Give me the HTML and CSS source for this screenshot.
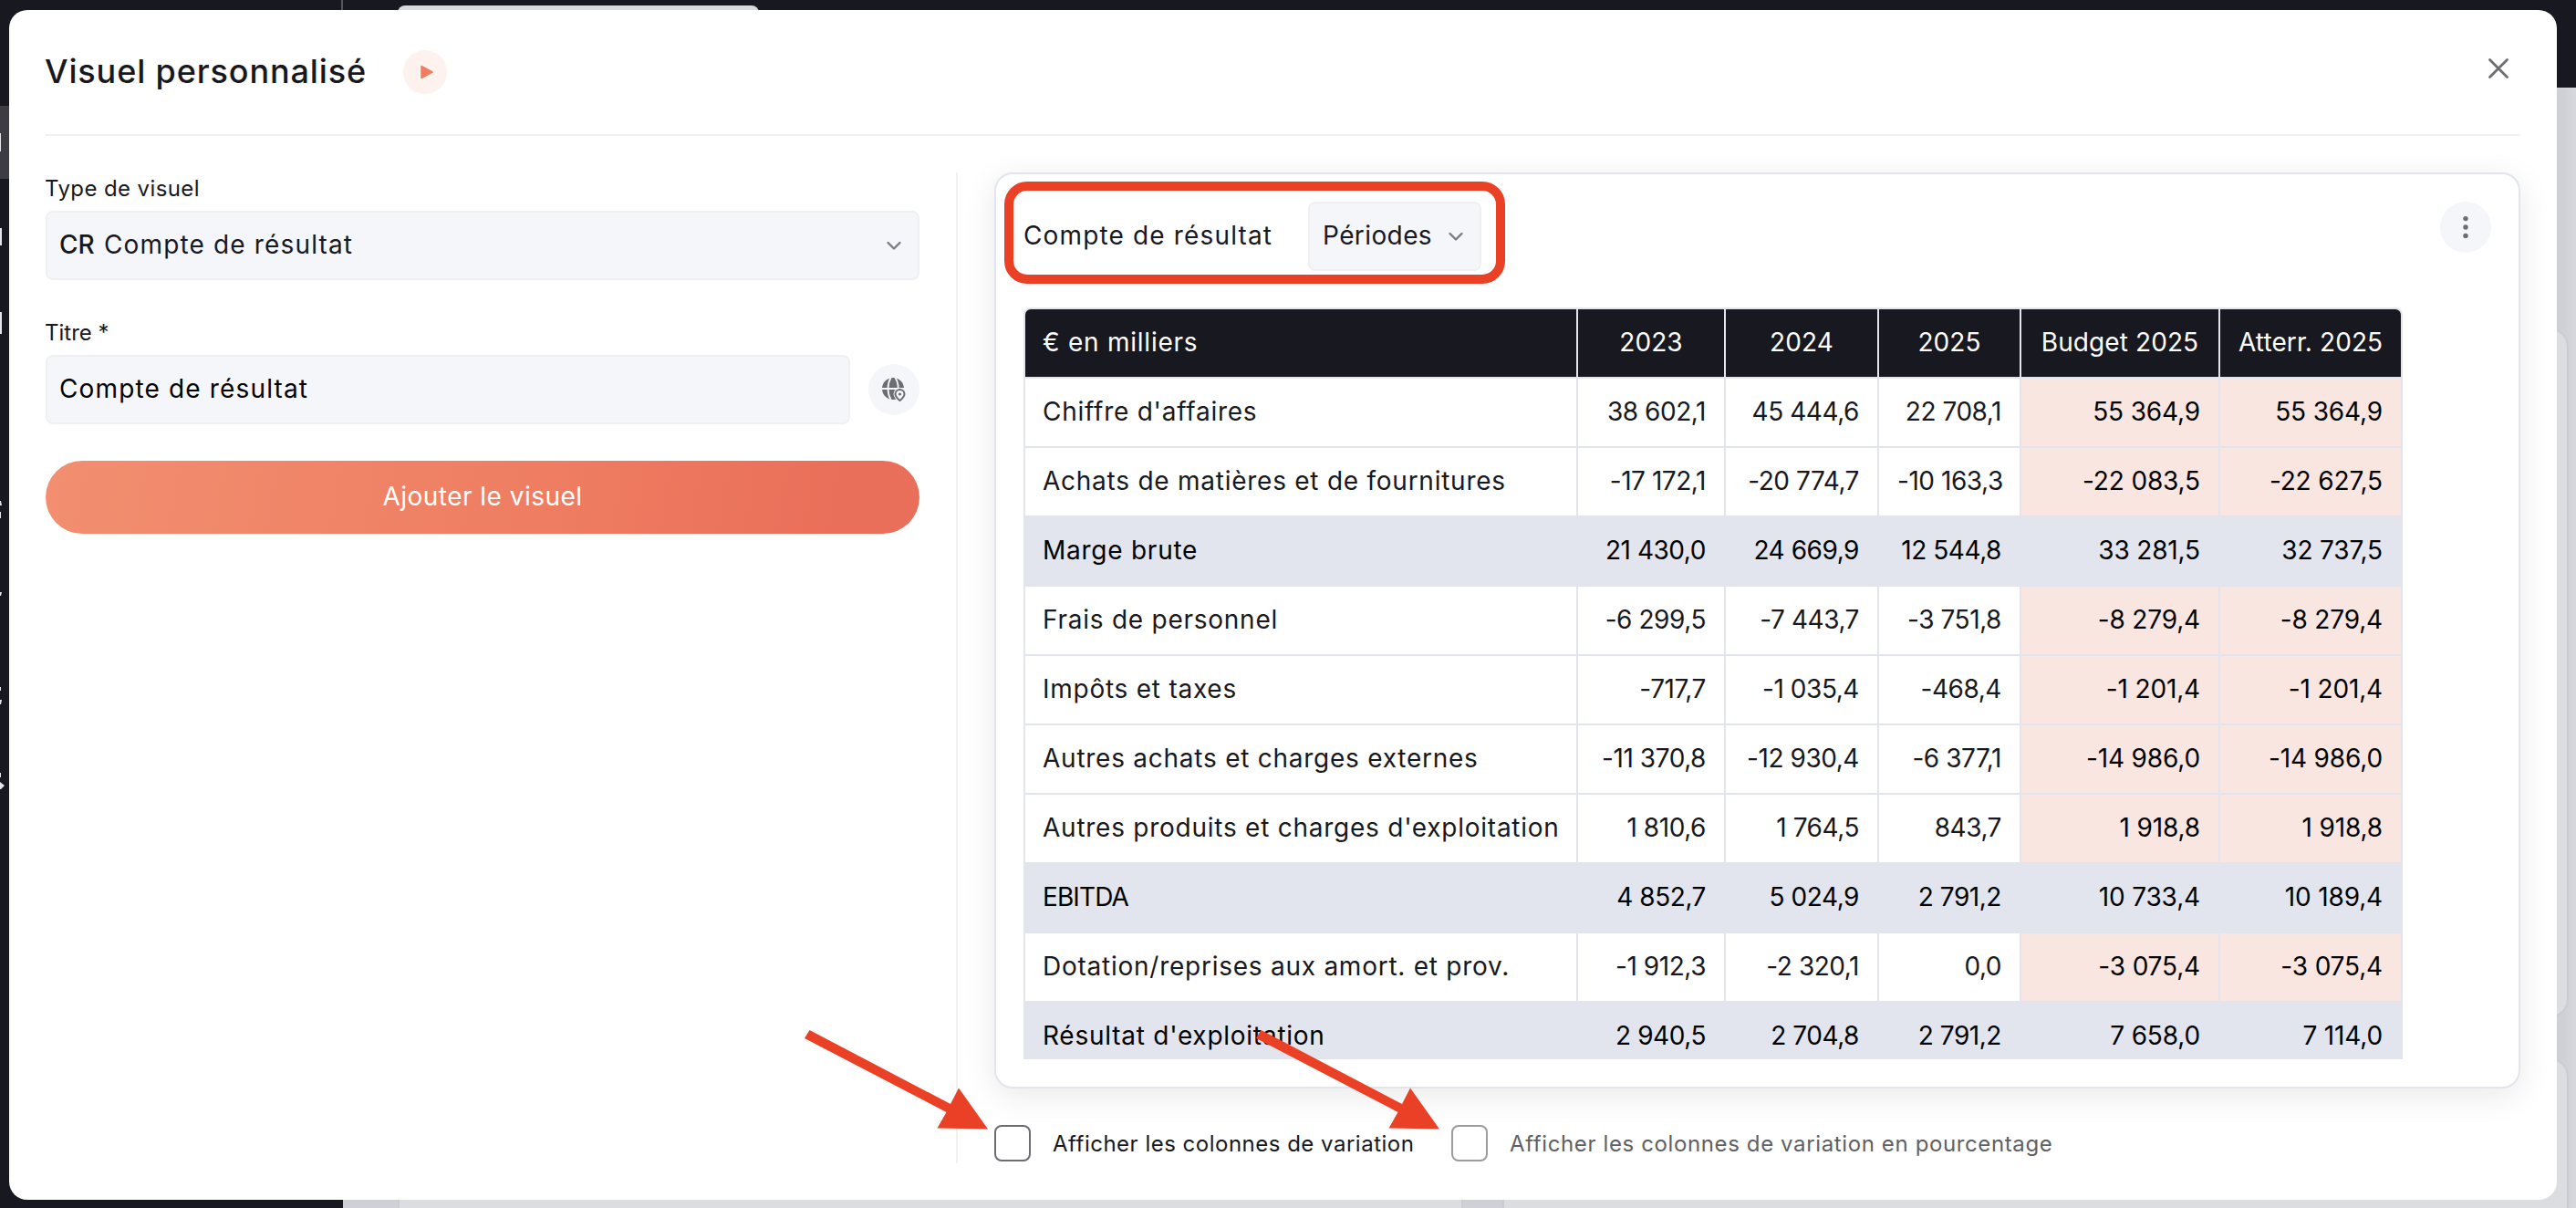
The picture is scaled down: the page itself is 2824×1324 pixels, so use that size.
FILE: index.html
```html
<!DOCTYPE html>
<html lang="fr">
<head>
    <meta charset="UTF-8">
    <meta name="viewport" content="width=device-width, initial-scale=1.0">
    <title>Visuel personnalisé</title>
    <link rel="stylesheet" href="styles.css">
</head>
<body>
    <!-- Dimmed application behind the dialog -->
    <div class="app">
        <div class="topbar">
            <div class="topbar-brand"></div>
            <div class="topbar-tab"></div>
        </div>
        <div class="app-body">
            <div class="sidebar">
                <div class="sidebar-active"></div>
                <svg class="sidebar-icons" width="10" height="900" viewBox="0 0 10 900" fill="#e4e5e8">
                    <path d="M0 146h1v20H0zM0 250h2v19H0zM0 342h2v24H0zM0 549h1l1 5H0zM0 561h1v7H0zM0 649h2l-1 4H0zM0 753h1v4H0zM0 767h2l-1 5H0zM0 847h1v5H0zM0 857l5 4-4 4H0z"/>
                </svg>
            </div>
            <div class="dashboard">
                <div class="tile tile-side"></div>
                <div class="tile"></div>
                <div class="tile tile-short"></div>
                <div class="tile"></div>
            </div>
        </div>
    </div>

    <div class="modal">
        <div class="modal-header">
            <h1 class="modal-title">Visuel personnalisé</h1>
            <button class="play">
                <svg width="14" height="16" viewBox="0 0 14 16"><path d="M1 1.500 13 8 1 14.500z" fill="#f07d61" stroke="#f07d61" stroke-width="1.500" stroke-linejoin="round"/></svg>
            </button>
            <button class="close">
                <svg width="24" height="24" viewBox="0 0 24 24"><path d="M2.500 2.500l19 19M21.500 2.500l-19 19" fill="none" stroke="#6c6c72" stroke-width="2.800" stroke-linecap="round"/></svg>
            </button>
        </div>

        <div class="modal-body">
            <div class="form">
                <label class="label label-type">Type de visuel</label>
                <div class="field">
                    <span class="field-code">CR</span>
                    <span class="field-text">Compte de résultat</span>
                    <svg class="chevron" width="20" height="12" viewBox="0 0 20 12"><path d="M3.500 3l6.500 6.500L16.500 3" fill="none" stroke="#7b7b82" stroke-width="2.400" stroke-linecap="round" stroke-linejoin="round"/></svg>
                </div>
                <label class="label label-title">Titre *</label>
                <div class="field-row">
                    <div class="field field-input"><span class="field-text">Compte de résultat</span></div>
                    <button class="round">
                        <svg width="28" height="28" viewBox="0 0 28 28">
                            <circle cx="13" cy="13" r="12" fill="#6c6c72"/>
                            <path d="M0 13h26M10.500 1C6.500 8 6.500 18 10.500 25M15.500 1c3 5 3.600 9 3 14" fill="none" stroke="#f5f6fa" stroke-width="1.800"/>
                            <path d="M20.500 28.500c-4.500-4-7-6.500-7-9.500a7 7 0 0 1 14 0c0 3-2.500 5.500-7 9.500z" fill="#f5f6fa"/>
                            <path d="M20.500 26c-3.600-3-5-4.800-5-7a5 5 0 0 1 10 0c0 2.200-1.400 4-5 7z" fill="#f5f6fa" stroke="#6c6c72" stroke-width="2"/>
                            <circle cx="20.500" cy="19" r="1.600" fill="#6c6c72"/>
                        </svg>
                    </button>
                </div>
                <button class="submit">Ajouter le visuel</button>
            </div>

            <div class="preview">
                <div class="card">
                    <div class="card-header">
                        <span class="card-title">Compte de résultat</span>
                        <div class="select">
                            <span class="select-text">Périodes</span>
                            <svg width="20" height="12" viewBox="0 0 20 12"><path d="M3.500 3l6.500 6.500L16.500 3" fill="none" stroke="#7b7b82" stroke-width="2.400" stroke-linecap="round" stroke-linejoin="round"/></svg>
                        </div>
                        <button class="round card-menu">
                            <svg width="6" height="26" viewBox="0 0 6 26" fill="#6c6c72"><circle cx="3" cy="3.600" r="2.700"/><circle cx="3" cy="13" r="2.700"/><circle cx="3" cy="22.400" r="2.700"/></svg>
                        </button>
                        <div class="highlight"></div>
                    </div>
                    <div class="table-wrap">
                        <table class="table">
                            <colgroup>
                                <col class="col-name">
                                <col class="col-2023">
                                <col class="col-2024">
                                <col class="col-2025">
                                <col class="col-budget">
                                <col class="col-atterr">
                            </colgroup>
                            <thead>
                                <tr><th>€ en milliers</th><th>2023</th><th>2024</th><th>2025</th><th>Budget 2025</th><th>Atterr. 2025</th></tr>
                            </thead>
                            <tbody>
                                <tr><td>Chiffre d'affaires</td><td>38 602,1</td><td>45 444,6</td><td>22 708,1</td><td>55 364,9</td><td>55 364,9</td></tr>
                                <tr><td>Achats de matières et de fournitures</td><td>-17 172,1</td><td>-20 774,7</td><td>-10 163,3</td><td>-22 083,5</td><td>-22 627,5</td></tr>
                                <tr class="total"><td>Marge brute</td><td>21 430,0</td><td>24 669,9</td><td>12 544,8</td><td>33 281,5</td><td>32 737,5</td></tr>
                                <tr><td>Frais de personnel</td><td>-6 299,5</td><td>-7 443,7</td><td>-3 751,8</td><td>-8 279,4</td><td>-8 279,4</td></tr>
                                <tr><td>Impôts et taxes</td><td>-717,7</td><td>-1 035,4</td><td>-468,4</td><td>-1 201,4</td><td>-1 201,4</td></tr>
                                <tr><td>Autres achats et charges externes</td><td>-11 370,8</td><td>-12 930,4</td><td>-6 377,1</td><td>-14 986,0</td><td>-14 986,0</td></tr>
                                <tr><td>Autres produits et charges d'exploitation</td><td>1 810,6</td><td>1 764,5</td><td>843,7</td><td>1 918,8</td><td>1 918,8</td></tr>
                                <tr class="total"><td class="acronym">EBITDA</td><td>4 852,7</td><td>5 024,9</td><td>2 791,2</td><td>10 733,4</td><td>10 189,4</td></tr>
                                <tr><td>Dotation/reprises aux amort. et prov.</td><td>-1 912,3</td><td>-2 320,1</td><td>0,0</td><td>-3 075,4</td><td>-3 075,4</td></tr>
                                <tr class="total"><td>Résultat d'exploitation</td><td>2 940,5</td><td>2 704,8</td><td>2 791,2</td><td>7 658,0</td><td>7 114,0</td></tr>
                            </tbody>
                        </table>
                    </div>
                </div>

                <div class="options">
                    <label class="option"><span class="checkbox"></span><span class="option-text">Afficher les colonnes de variation</span></label>
                    <label class="option option-disabled"><span class="checkbox"></span><span class="option-text">Afficher les colonnes de variation en pourcentage</span></label>
                </div>
            </div>
        </div>

        <svg class="arrow arrow-first" width="202" height="110" viewBox="0 0 202 110"><path d="M5.500 0 160 81 169 63.500 201 108.500 145.500 107.500 155.500 90 0 9z" fill="#ea4025"/></svg>
        <svg class="arrow arrow-second" width="202" height="110" viewBox="0 0 202 110"><path d="M5.500 0 160 81 169 63.500 201 108.500 145.500 107.500 155.500 90 0 9z" fill="#ea4025"/></svg>
    </div>
</body>
</html>
```

FILE: styles.css
```css
* {
    box-sizing: border-box;
}

body {
    margin: 0;
    width: 2824px;
    height: 1324px;
    position: relative;
    overflow: hidden;
    font-family: Inter, "Open Sans", sans-serif;
    font-size: 28px;
    color: #181820;
    background-color: #d9dadf;
}

button {
    border: none;
    padding: 0;
    font: inherit;
    display: flex;
    align-items: center;
    justify-content: center;
}

/* background application */
.app {
    display: flex;
    flex-direction: column;
    height: 100%;
}

.topbar {
    display: flex;
    height: 96px;
    background-color: #181820;
}

.topbar-brand {
    width: 376px;
    border-right: 2px solid #55555c;
}

.topbar-tab {
    width: 396px;
    height: 40px;
    margin: 6px 0 0 60px;
    border-radius: 8px;
    background-color: #d9dadd;
}

.app-body {
    display: flex;
    flex: 1;
    min-height: 0;
}

.sidebar {
    width: 376px;
    position: relative;
    background-color: #181820;
}

.sidebar-active {
    height: 80px;
    margin-top: 20px;
    background-color: #3c3c42;
}

.sidebar-icons {
    position: absolute;
    left: 0;
    top: -96px;
}

.dashboard {
    flex: 1;
    display: grid;
    grid-template-columns: 1168px 1169px;
    grid-template-rows: 755px 200px;
    gap: 45px 43px;
    padding: 264px 0 0 60px;
    background-color: #cfd0d5;
    box-shadow: inset -10px 0 10px -4px #d9dadf;
}

.tile {
    border: 2px solid #cbccd1;
    border-radius: 20px;
    background-color: #dcdde0;
}

.tile-side {
    width: 1168px;
}

.tile-short {
    border-radius: 20px 20px 0 0;
}

/* dialog */
.modal {
    position: absolute;
    left: 10px;
    top: 11px;
    width: 2793px;
    height: 1304px;
    padding: 0 40px;
    border-radius: 20px;
    background-color: #fff;
}

.modal-header {
    display: flex;
    align-items: center;
    height: 138px;
    border-bottom: 2px solid #f1f1f3;
}

.modal-title {
    margin: 0 41px 2px -1px;
    width: 352px;
    font-size: 36px;
    font-weight: 500;
    letter-spacing: 0.88px;
    white-space: nowrap;
}

.play {
    width: 48px;
    height: 48px;
    padding-left: 3px;
    border-radius: 50%;
    background-color: #fef2ee;
}

.close {
    margin: 0 12px 9px auto;
    background: none;
}

.modal-body {
    display: flex;
    height: 1126px;
    padding-top: 40px;
}

.form {
    width: 1000px;
    padding-right: 40px;
    border-right: 2px solid #f1f1f4;
}

.label {
    display: block;
    height: 42px;
    margin-left: -1px;
    line-height: 36px;
    font-size: 24px;
    letter-spacing: 0.4px;
}

.label-title {
    margin-top: 40px;
    letter-spacing: 0;
}

.field {
    display: flex;
    align-items: center;
    height: 76px;
    padding: 0 16px 2px 13px;
    border: 2px solid #f0f0f3;
    border-radius: 8px;
    background-color: #f5f6fa;
}

.field-code {
    width: 49px;
    font-weight: 500;
}

.field-text,
.card-title {
    letter-spacing: 1.15px;
}

.chevron {
    margin: 2px 0 0 auto;
}

.field-row {
    display: flex;
    align-items: center;
    gap: 20px;
}

.field-input {
    width: 882px;
    color: #000;
}

.round {
    width: 56px;
    height: 56px;
    border-radius: 50%;
    background-color: #f5f6fa;
}

.submit {
    width: 100%;
    height: 80px;
    margin-top: 40px;
    padding-bottom: 2px;
    border-radius: 40px;
    color: #fff;
    letter-spacing: 0.48px;
    background: linear-gradient(100deg, #f28f70 0%, #ee7c60 60%, #ea6f5a 90%);
}

.preview {
    flex: 1;
    padding-left: 40px;
}

.card {
    height: 1004px;
    padding: 30px 30px 0;
    border: 2px solid #e2e5ed;
    border-radius: 20px;
    background-color: #fff;
    box-shadow: 0 8px 36px rgba(0, 0, 0, 0.09);
}

.card-header {
    display: flex;
    position: relative;
    height: 116px;
}

.card-title {
    width: 312px;
    line-height: 74px;
}

.select {
    display: flex;
    align-items: center;
    justify-content: space-between;
    width: 190px;
    height: 76px;
    padding: 0 16px 0 14px;
    border: 2px solid #f0f0f3;
    border-radius: 8px;
    background-color: #f5f6fa;
}

.select-text {
    padding-bottom: 2px;
    letter-spacing: 0.4px;
}

.card-menu {
    margin-left: auto;
}

/* frame drawn over the card title */
.highlight {
    position: absolute;
    left: -21px;
    top: -22px;
    width: 549px;
    height: 112px;
    border: 10px solid #ea4025;
    border-radius: 25px;
}

.table-wrap {
    width: 1512px;
    height: 824px;
    overflow: hidden;
    border-radius: 8px 8px 0 0;
}

.table {
    width: 1512px;
    table-layout: fixed;
    border-collapse: separate;
    border-spacing: 2px;
    background-color: #e2e5ed;
}

.table th,
.table td {
    height: 74px;
    padding: 0 20px 2px;
    background-color: #fff;
    text-align: right;
    white-space: nowrap;
}

.table th {
    background-color: #181820;
    color: #fff;
    font-weight: 400;
    letter-spacing: 0.1px;
    text-align: center;
}

.table th:first-child,
.table td:first-child {
    padding-left: 19px;
    text-align: left;
    letter-spacing: 0.75px;
}

.table .acronym:first-child {
    letter-spacing: -0.9px;
}

.table th:first-child {
    border-top-left-radius: 6px;
}

.table th:last-child {
    border-top-right-radius: 6px;
}

.table td + td {
    letter-spacing: -0.45px;
}

.table td:nth-child(n+5) {
    background-color: #fae6e0;
    color: #000;
    letter-spacing: -0.15px;
}

.table .total td {
    background-color: #e2e5ed;
    color: #000;
}

.col-name { width: 604px; }
.col-2023 { width: 160px; }
.col-2024 { width: 166px; }
.col-2025 { width: 154px; }
.col-budget { width: 216px; }
.col-atterr { width: 198px; }

.options {
    display: flex;
    padding-top: 40px;
    font-size: 24px;
}

.option {
    display: flex;
    align-items: center;
    flex: none;
    width: 501px;
    white-space: nowrap;
    letter-spacing: 0.5px;
}

.checkbox {
    flex: none;
    width: 40px;
    height: 40px;
    margin-right: 24px;
    border: 2px solid #6c6c72;
    border-radius: 8px;
}

.option-disabled {
    color: #5f5f64;
    letter-spacing: 0.62px;
}

.option-disabled .checkbox {
    border-color: #9c9c9f;
}

.arrow {
    position: absolute;
    top: 1118px;
}

.arrow-first {
    left: 872px;
}

.arrow-second {
    left: 1367px;
}
```
